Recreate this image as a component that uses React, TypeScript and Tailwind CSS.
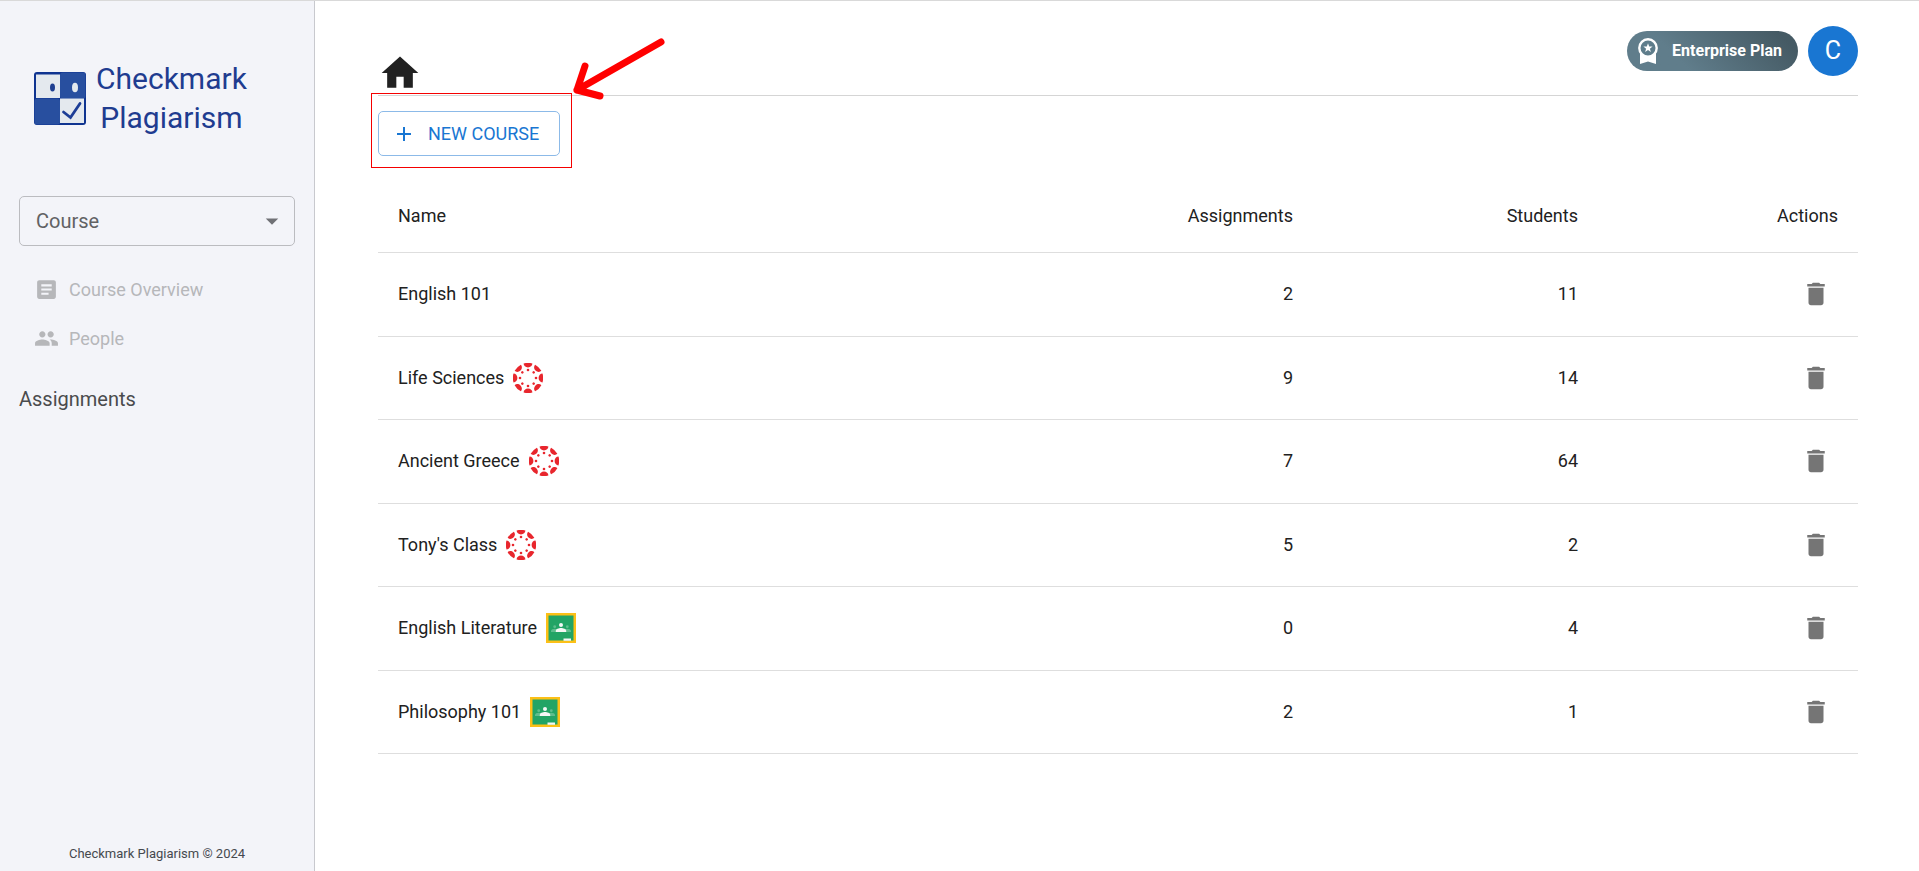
import { useState } from "react";
import {
  MdAdd,
  MdArrowDropDown,
  MdArticle,
  MdDelete,
  MdHome,
  MdPeople,
} from "react-icons/md";

type Source = "canvas" | "classroom";

interface Course {
  id: number;
  name: string;
  source?: Source;
  assignments: number;
  students: number;
}

const initialCourses: Course[] = [
  { id: 1, name: "English 101", assignments: 2, students: 11 },
  { id: 2, name: "Life Sciences", source: "canvas", assignments: 9, students: 14 },
  { id: 3, name: "Ancient Greece", source: "canvas", assignments: 7, students: 64 },
  { id: 4, name: "Tony's Class", source: "canvas", assignments: 5, students: 2 },
  { id: 5, name: "English Literature", source: "classroom", assignments: 0, students: 4 },
  { id: 6, name: "Philosophy 101", source: "classroom", assignments: 2, students: 1 },
];

function Logo() {
  return (
    <svg viewBox="0 0 52 53" className="w-[52px] h-[53px] shrink-0" aria-hidden="true">
      <rect width="52" height="53" rx="3" fill="#0f3490" />
      <rect x="26" y="0.5" width="25.5" height="26" rx="2.5" fill="#284f9f" />
      <rect x="0.5" y="26.5" width="25.5" height="26" rx="2.5" fill="#284f9f" />
      <rect x="2" y="2.5" width="24" height="23.5" fill="#e4e9ee" />
      <rect x="26" y="26.5" width="24" height="24.5" fill="#e4e9ee" />
      <ellipse cx="18.5" cy="15.5" rx="2.5" ry="4" fill="#1f3f90" />
      <ellipse cx="41" cy="15.5" rx="3" ry="4.7" fill="#e4e9ee" />
      <path
        d="M29.5 40l7 5.5L46 31.5"
        fill="none"
        stroke="#1c3d96"
        strokeWidth="2.8"
        strokeLinecap="round"
      />
    </svg>
  );
}

function CanvasIcon() {
  return (
    <svg viewBox="0 0 30 30" className="size-[30px]" role="img" aria-label="Canvas">
      {[0, 45, 90, 135, 180, 225, 270, 315].map((angle) => (
        <g key={angle} transform={`rotate(${angle} 15 15)`} fill="#e8262d">
          <path d="M10.6 0.5a15 15 0 0 1 8.8 0c0 2.2-2 3.9-4.4 3.9s-4.4-1.7-4.4-3.9z" />
          <circle cx="15" cy="7" r="1.3" />
        </g>
      ))}
    </svg>
  );
}

function ClassroomIcon() {
  return (
    <svg viewBox="0 0 30 30" className="size-[30px]" role="img" aria-label="Google Classroom">
      <rect width="30" height="30" fill="#fcc017" />
      <rect x="2.5" y="2.5" width="25" height="25" fill="#22a465" />
      <g fill="#5dbd8d">
        <circle cx="8.7" cy="13.7" r="1.4" />
        <circle cx="21.3" cy="13.7" r="1.4" />
        <path d="M5 19v-1c0-1.4 2-2.2 3.7-2.2S12 16.6 12 18v1zM18 19v-1c0-1.4 1.7-2.2 3.3-2.2S25 16.6 25 18v1z" />
      </g>
      <g fill="#f4f7f5">
        <circle cx="15" cy="12" r="2" />
        <path d="M9.8 19v-1.2c0-1.8 3-2.8 5.2-2.8s5.2 1 5.2 2.8V19z" />
        <rect x="17.5" y="25.5" width="7.5" height="2.3" />
      </g>
    </svg>
  );
}

function PremiumIcon() {
  return (
    <svg viewBox="0 0 20 28" className="w-5 h-7" aria-hidden="true">
      <path d="M2 16h16v11l-8-2.5L2 27z" fill="#fff" />
      <circle cx="10" cy="11" r="8.7" fill="#5f7d8b" stroke="#fff" strokeWidth="2.4" />
      <path
        d="M10 6.3l1.2 3.2 3.4.1-2.7 2.1 1 3.3-2.9-1.9-2.9 1.9 1-3.3-2.7-2.1 3.4-.1z"
        fill="#fff"
      />
    </svg>
  );
}

function Sidebar() {
  return (
    <aside className="w-[315px] shrink-0 flex flex-col bg-[#f3f4f9] border-r border-[#c8c9ce]">
      <div className="flex items-center gap-[10px] pl-[34px] pt-[58px]">
        <Logo />
        <div className="text-[30px] leading-[39px] text-center text-[#1f3c90]">
          Checkmark
          <br />
          Plagiarism
        </div>
      </div>

      <div className="relative mx-[19px] mt-[59px]">
        <select
          aria-label="Course"
          className="block w-full h-[50px] appearance-none rounded-[5px] border border-[#bbbcc0] bg-transparent pl-4 text-xl text-[#616264]"
        >
          <option>Course</option>
        </select>
        <MdArrowDropDown className="absolute right-2 top-[10px] size-[30px] text-[#707176] pointer-events-none" />
      </div>

      <nav className="mt-[31px] pl-[34px] flex flex-col gap-6 text-lg leading-[25px] text-[#b6b7ba]">
        <a href="#overview" className="flex items-center gap-[10px]">
          <MdArticle className="size-[25px]" />
          Course Overview
        </a>
        <a href="#people" className="flex items-center gap-[10px]">
          <MdPeople className="size-[25px]" />
          People
        </a>
      </nav>

      <h2 className="mt-[34px] pl-[19px] text-xl text-[#4a4b4d]">Assignments</h2>

      <footer className="mt-auto pb-[7px] text-center text-[13px] leading-5 text-[#45494f]">
        Checkmark Plagiarism © 2024
      </footer>
    </aside>
  );
}

function Header() {
  return (
    <header className="flex items-end justify-between pt-[25px] border-b border-[#d5d5d5]">
      <a href="#home" aria-label="Home">
        <MdHome className="size-11 text-[#212121]" />
      </a>
      <div className="flex items-center gap-[10px] mb-[19px]">
        <button className="flex items-center gap-[14px] h-10 pl-[11px] pr-4 rounded-full bg-linear-45 from-[#607d8b] from-30% to-[#455a64] to-90% text-base font-bold text-white">
          <PremiumIcon />
          Enterprise Plan
        </button>
        <button
          aria-label="Account"
          className="size-[50px] rounded-full bg-[#1976d2] text-[25px] text-white"
        >
          C
        </button>
      </div>
    </header>
  );
}

// red frame and arrow that point at the new course button
function Callout() {
  return (
    <div className="absolute -left-[7px] -top-[18px] -right-3 -bottom-3 border border-[#f50000] pointer-events-none">
      <svg
        viewBox="0 0 96 66"
        className="absolute left-full bottom-full w-24 h-[66px] overflow-visible"
        aria-hidden="true"
      >
        <path
          d="M90 14L6 62M14 38L6 62L29 68"
          fill="none"
          stroke="#ff0000"
          strokeWidth="7"
          strokeLinecap="round"
          strokeLinejoin="round"
        />
      </svg>
    </div>
  );
}

export default function App() {
  const [courses, setCourses] = useState(initialCourses);

  const handleAdd = () => {
    setCourses([
      ...courses,
      { id: Date.now(), name: "New Course", assignments: 0, students: 0 },
    ]);
  };

  const handleDelete = (id: number) => {
    setCourses(courses.filter((course) => course.id !== id));
  };

  return (
    <div className="min-h-screen flex border-t border-[#d9d9d9] bg-white font-[Roboto,sans-serif] text-[#212121]">
      <Sidebar />
      <main className="flex-1 pl-[63px] pr-[61px]">
        <Header />
        <div className="relative w-fit mt-[15px]">
          <button
            onClick={handleAdd}
            className="flex items-center gap-3 h-[45px] pl-[13px] pr-5 rounded-[5px] border border-[#8cbae8] text-lg text-[#1976d2]"
          >
            <MdAdd className="size-6" />
            NEW COURSE
          </button>
          <Callout />
        </div>

        <table className="mt-6 w-full table-fixed text-lg">
          <thead>
            <tr className="h-[72px] border-b border-[#dedede]">
              <th className="px-5 text-left font-normal">Name</th>
              <th className="w-[320px] px-5 text-right font-normal">Assignments</th>
              <th className="w-[285px] px-5 text-right font-normal">Students</th>
              <th className="w-[260px] px-5 text-right font-normal">Actions</th>
            </tr>
          </thead>
          <tbody>
            {courses.map((course) => (
              <tr
                key={course.id}
                className="odd:h-[84px] even:h-[83px] border-b border-[#dedede]"
              >
                <td className="px-5">
                  <div className="flex items-center gap-[9px]">
                    {course.name}
                    {course.source === "canvas" && <CanvasIcon />}
                    {course.source === "classroom" && <ClassroomIcon />}
                  </div>
                </td>
                <td className="px-5 text-right">{course.assignments}</td>
                <td className="px-5 text-right">{course.students}</td>
                <td className="px-5">
                  <button
                    onClick={() => handleDelete(course.id)}
                    aria-label={`Delete ${course.name}`}
                    className="block ml-auto p-[7px] text-[#757575]"
                  >
                    <MdDelete className="size-[30px]" />
                  </button>
                </td>
              </tr>
            ))}
          </tbody>
        </table>
      </main>
    </div>
  );
}
